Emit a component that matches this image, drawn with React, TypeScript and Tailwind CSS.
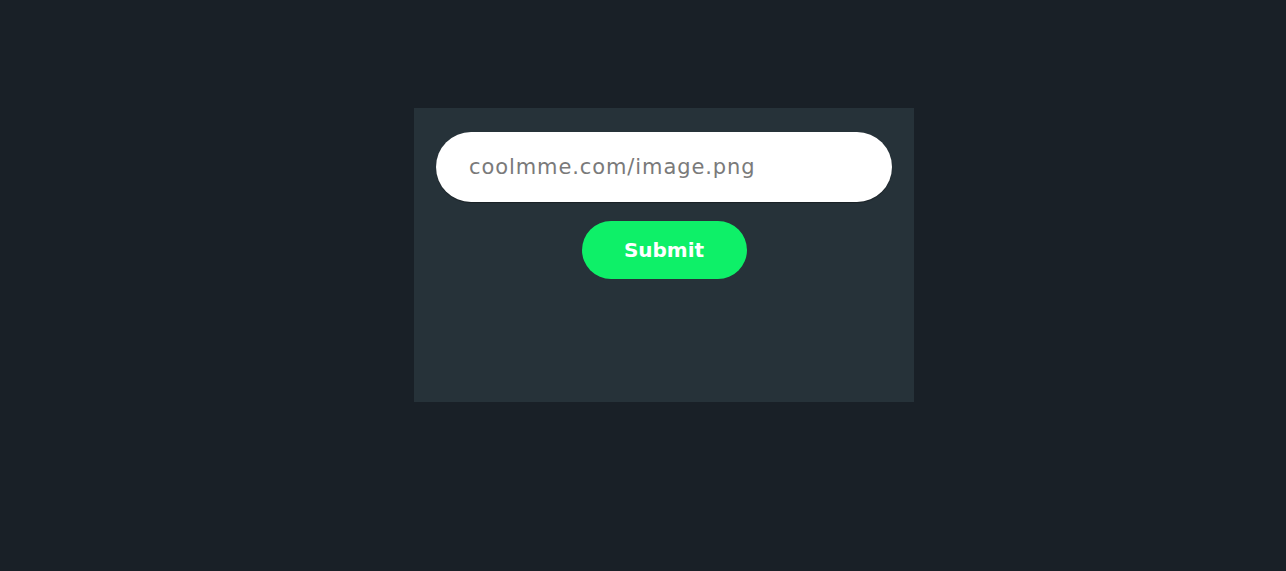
export default function App() {
  return (
    <div className="min-h-[571px] w-full bg-[#192027] pt-[108px] font-['DejaVu_Sans',sans-serif]">
      <div className="ml-[414px] flex h-[294px] w-[500px] flex-col items-center bg-[#263239] px-[22px] pt-[24px]">
        <input
          type="text"
          placeholder="coolmme.com/image.png"
          className="h-[70px] w-full rounded-full bg-white px-[33px] text-[21px] tracking-[0.9px] text-[#444] shadow-[0_1px_1px_rgba(0,0,0,0.35)] outline-none placeholder:text-[#7a7a7a]"
        />
        <button className="mt-[19px] h-[58px] w-[165px] rounded-full bg-[#0ef068] text-[20px] font-bold text-white">
          Submit
        </button>
      </div>
    </div>
  );
}
